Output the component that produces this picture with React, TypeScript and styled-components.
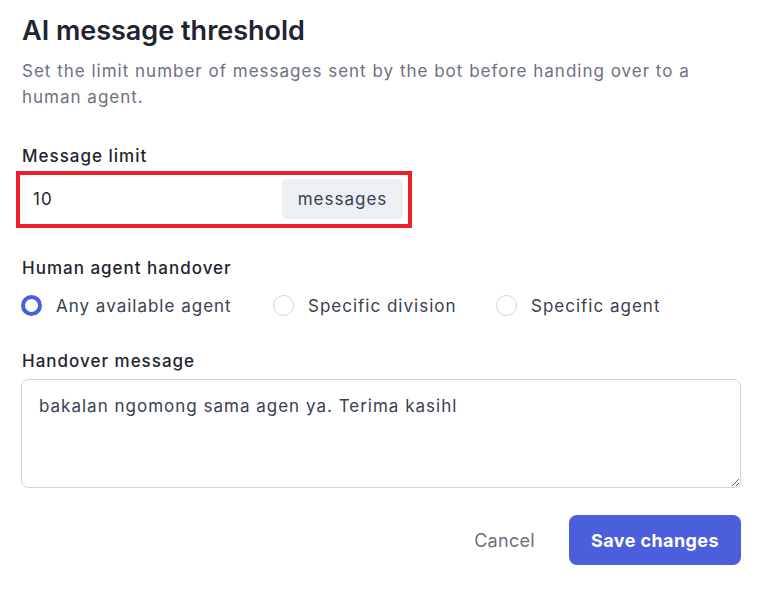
import React, { useState } from "react";
import styled, { createGlobalStyle } from "styled-components";

const Global = createGlobalStyle`
  html, body { margin: 0; padding: 0; background: #ffffff; }
  body { font-family: Inter, "Noto Sans", sans-serif; color: #1f2937; }
  * { box-sizing: border-box; }
`;

const Panel = styled.div`
  width: 762px;
  padding: 14px 0 0 21px;
  display: flex;
  flex-direction: column;
`;

const Title = styled.h1`
  margin: 0;
  font-size: 27px;
  line-height: 34px;
  font-weight: 600;
  color: #1f2530;
  padding-left: 1px;
`;

const Subtitle = styled.p`
  margin: 10px 0 0;
  font-size: 17px;
  line-height: 26px;
  letter-spacing: 1px;
  color: #6b7280;
  padding-left: 1px;
  max-width: 700px;
`;

const Field = styled.div<{ $top: number }>`
  margin-top: ${(p) => p.$top}px;
  display: flex;
  flex-direction: column;
`;

const Label = styled.label`
  font-size: 17px;
  line-height: 24px;
  font-weight: 500;
  letter-spacing: 1px;
  color: #1f2530;
  padding-left: 1px;
`;

const Highlight = styled.div`
  margin-top: 3px;
  margin-left: -5px;
  width: 396px;
  height: 57px;
  border: 4px solid #ee1f2b;
  padding: 4px 5px 5px 4px;
  display: flex;
  align-items: stretch;
`;

const InputGroup = styled.div`
  flex: 1;
  min-width: 0;
  display: flex;
  align-items: center;
  background: #fff;
`;

const NumberInput = styled.input`
  flex: 1;
  min-width: 0;
  width: 0;
  border: none;
  outline: none;
  font-family: inherit;
  font-size: 17px;
  letter-spacing: 1px;
  color: #1f2530;
  padding: 0 0 0 9px;
  background: transparent;
`;

const Addon = styled.span`
  flex: none;
  width: 121px;
  height: 40px;
  background: #edf0f3;
  border-radius: 5px;
  display: flex;
  align-items: center;
  justify-content: center;
  font-size: 17px;
  letter-spacing: 1px;
  color: #374151;
`;

const RadioRow = styled.div`
  margin-top: 15px;
  display: flex;
  align-items: center;
`;

const RadioOption = styled.label<{ $w: number }>`
  width: ${(p) => p.$w}px;
  display: flex;
  align-items: center;
  gap: 14px;
  font-size: 17px;
  letter-spacing: 1px;
  color: #374151;
  cursor: pointer;
`;

const RadioDot = styled.span<{ $on: boolean }>`
  width: 21px;
  height: 21px;
  border-radius: 50%;
  border: ${(p) => (p.$on ? "4.5px solid #4b5fdd" : "1.5px solid #d1d5db")};
  background: #fff;
  flex: none;
`;

const TextArea = styled.textarea`
  margin-top: 6px;
  width: 720px;
  height: 109px;
  border: 1px solid #d1d5db;
  border-radius: 7px;
  padding: 14px 17px;
  font-family: inherit;
  font-size: 17px;
  line-height: 24px;
  letter-spacing: 1px;
  color: #374151;
  outline: none;
`;

const Footer = styled.div`
  margin-top: 27px;
  width: 720px;
  display: flex;
  justify-content: flex-end;
  align-items: center;
  gap: 34px;
`;

const CancelButton = styled.button`
  border: none;
  background: none;
  font-family: inherit;
  font-size: 18px;
  letter-spacing: 0.3px;
  color: #6b7280;
  padding: 0;
  cursor: pointer;
`;

const SaveButton = styled.button`
  width: 172px;
  height: 50px;
  border: none;
  border-radius: 8px;
  background: #4b5fdd;
  color: #fff;
  font-family: inherit;
  font-size: 18px;
  font-weight: 700;
  letter-spacing: 0.4px;
  cursor: pointer;
`;

const options = [
  { label: "Any available agent", w: 252 },
  { label: "Specific division", w: 223 },
  { label: "Specific agent", w: 200 },
];

export default function App() {
  const [sel, setSel] = useState(0);
  return (
    <>
      <Global />
      <Panel>
        <Title>AI message threshold</Title>
        <Subtitle>
          Set the limit number of messages sent by the bot before handing over to a human agent.
        </Subtitle>
        <Field $top={34}>
          <Label>Message limit</Label>
          <Highlight>
            <InputGroup>
              <NumberInput defaultValue="10" />
              <Addon>messages</Addon>
            </InputGroup>
          </Highlight>
        </Field>
        <Field $top={28}>
          <Label>Human agent handover</Label>
          <RadioRow>
            {options.map((o, i) => (
              <RadioOption key={o.label} $w={o.w} onClick={() => setSel(i)}>
                <RadioDot $on={sel === i} />
                {o.label}
              </RadioOption>
            ))}
          </RadioRow>
        </Field>
        <Field $top={33}>
          <Label>Handover message</Label>
          <TextArea defaultValue="bakalan ngomong sama agen ya. Terima kasihl" />
        </Field>
        <Footer>
          <CancelButton>Cancel</CancelButton>
          <SaveButton>Save changes</SaveButton>
        </Footer>
      </Panel>
    </>
  );
}
